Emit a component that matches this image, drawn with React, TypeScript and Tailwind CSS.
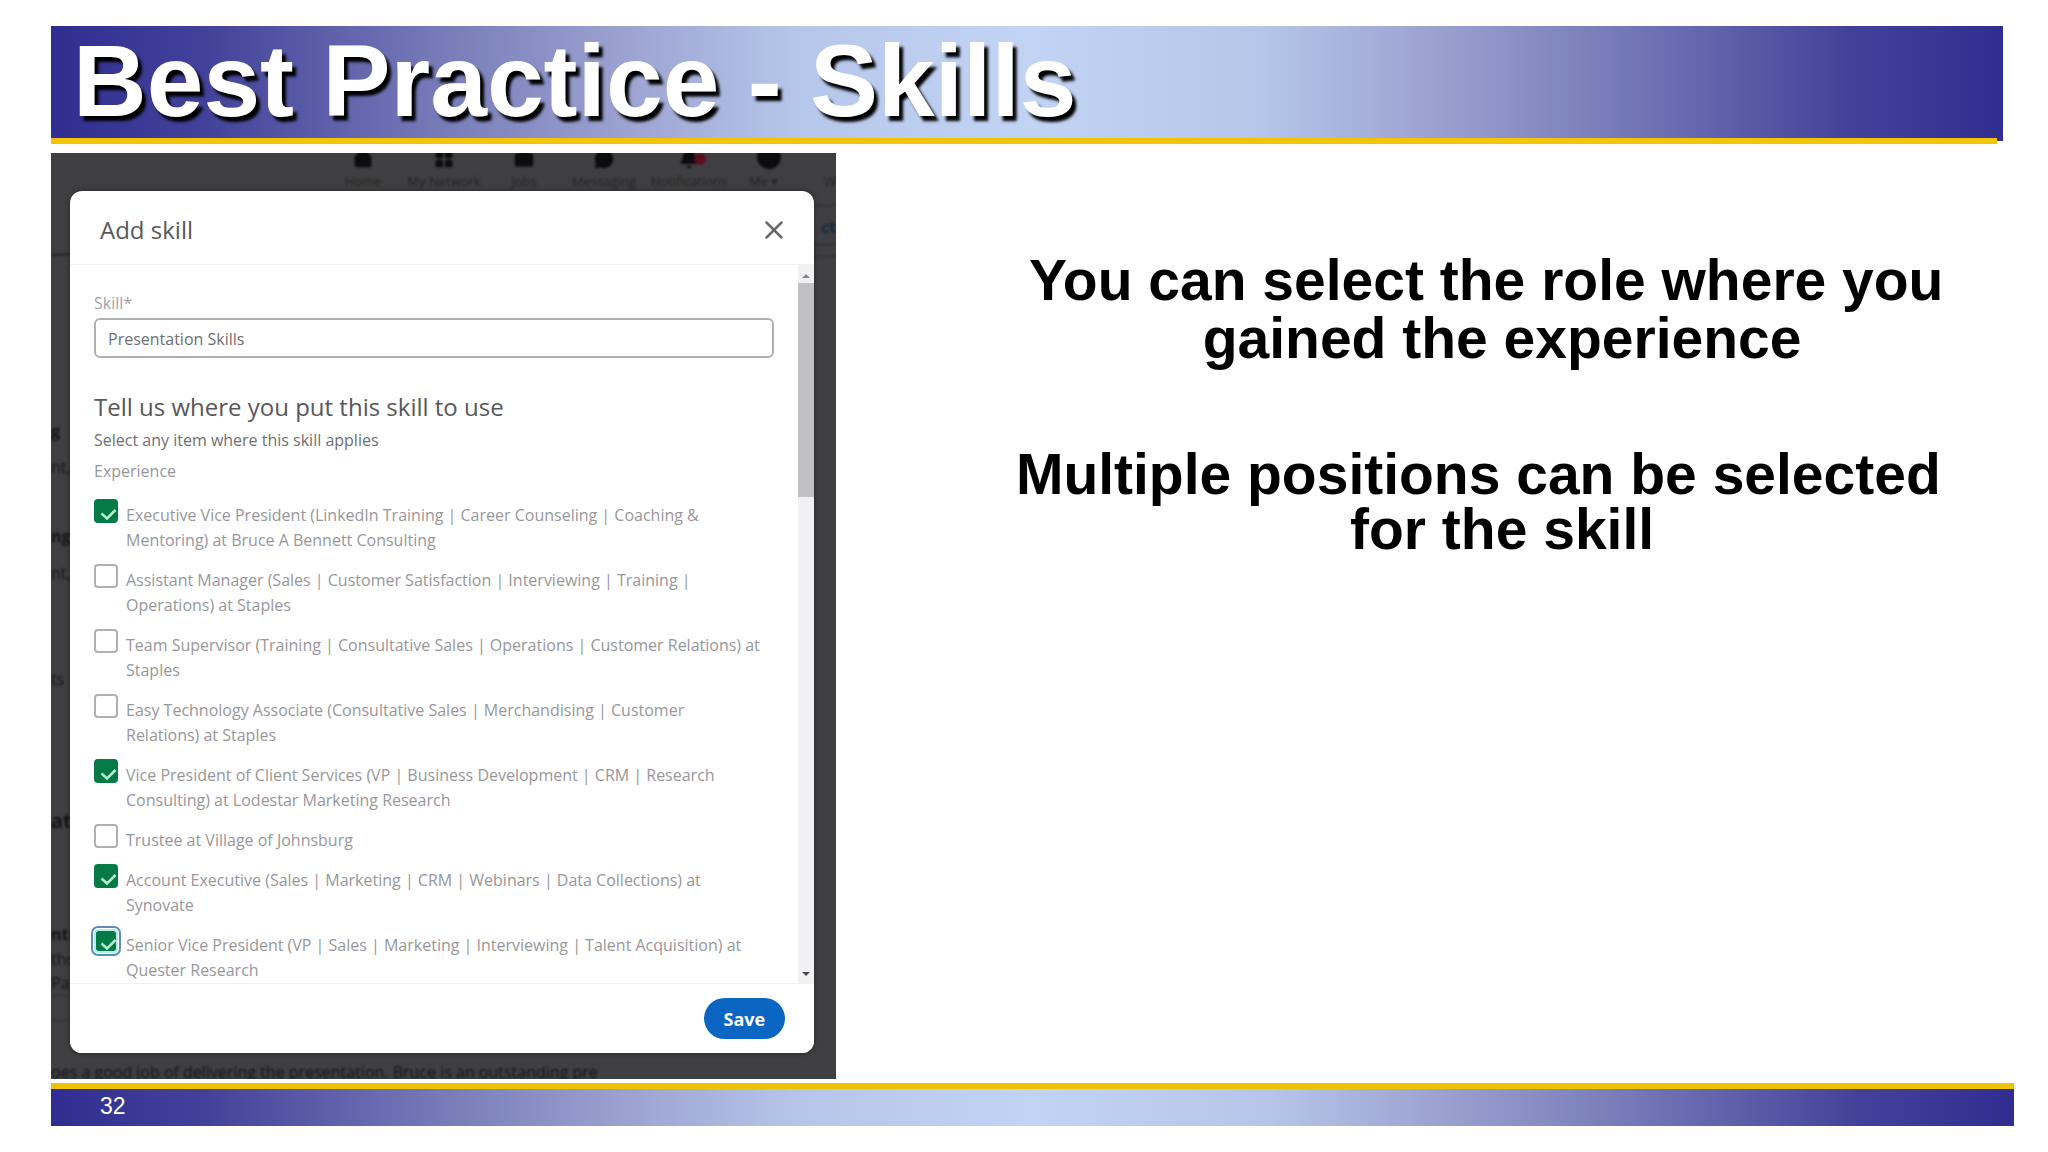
import { useState } from "react";
import { Bell, BriefcaseBusiness, House, LayoutGrid, MessageCircle, X } from "lucide-react";

const roles = [
  {
    id: "bennett",
    lines: ["Executive Vice President (LinkedIn Training | Career Counseling | Coaching &", "Mentoring) at Bruce A Bennett Consulting"],
    checked: true,
  },
  {
    id: "staples-manager",
    lines: ["Assistant Manager (Sales | Customer Satisfaction | Interviewing | Training |", "Operations) at Staples"],
    checked: false,
  },
  {
    id: "staples-supervisor",
    lines: ["Team Supervisor (Training | Consultative Sales | Operations | Customer Relations) at", "Staples"],
    checked: false,
  },
  {
    id: "staples-tech",
    lines: ["Easy Technology Associate (Consultative Sales | Merchandising | Customer", "Relations) at Staples"],
    checked: false,
  },
  {
    id: "lodestar",
    lines: ["Vice President of Client Services (VP | Business Development | CRM | Research", "Consulting) at Lodestar Marketing Research"],
    checked: true,
  },
  {
    id: "johnsburg",
    lines: ["Trustee at Village of Johnsburg"],
    checked: false,
  },
  {
    id: "synovate",
    lines: ["Account Executive (Sales | Marketing | CRM | Webinars | Data Collections) at", "Synovate"],
    checked: true,
  },
  {
    id: "quester",
    lines: ["Senior Vice President (VP | Sales | Marketing | Interviewing | Talent Acquisition) at", "Quester Research"],
    checked: true,
    focused: true,
  },
];

const navItems = [
  { name: "Home", icon: House, place: "left-[272px]" },
  { name: "My Network", icon: LayoutGrid, place: "left-[353px]" },
  { name: "Jobs", icon: BriefcaseBusiness, place: "left-[433px]" },
  { name: "Messaging", icon: MessageCircle, place: "left-[513px]" },
  { name: "Notifications", icon: Bell, place: "left-[598px]" },
];

// Bits of the profile page that stick out from behind the dialog
const pageScraps = [
  { text: "g", place: "top-[266px] font-bold" },
  { text: "nt,", place: "top-[302px]" },
  { text: "ng", place: "top-[371px] font-bold" },
  { text: "nt,", place: "top-[408px]" },
  { text: "ts", place: "top-[514px]" },
  { text: "at", place: "top-[656px] text-xl font-bold" },
  { text: "nts", place: "top-[769px] font-bold" },
  { text: "tho", place: "top-[794px]" },
  { text: "Pa", place: "top-[818px]" },
];

function ProfileBackdrop() {
  return (
    <div className="absolute inset-0 text-base text-[#141416] blur-[1px]" aria-hidden="true">
      {navItems.map((item) => (
        <div key={item.name} className={`absolute -top-1 flex w-20 flex-col items-center ${item.place}`}>
          <item.icon className="size-5 fill-current text-[#0c0c0c]" />
          <span className="mt-0.5 text-[13px] leading-5 whitespace-nowrap text-[#232325]">{item.name}</span>
        </div>
      ))}
      <div className="absolute top-0 left-[643px] h-3 w-3 rounded-full bg-[#5c0d1d]" />
      <div className="absolute -top-2 left-[706px] size-6 rounded-full bg-[#0c0c0c]" />
      <span className="absolute top-[18px] left-[698px] text-[13px] leading-5 text-[#232325]">Me ▾</span>
      <span className="absolute top-[18px] right-0 text-[13px] leading-5 text-[#232325]">W</span>
      <div className="absolute top-[52px] right-0 h-[40px] w-6 border-y border-[#2a2a2c]" />
      <span className="absolute top-[64px] right-0 text-base leading-5 font-bold text-[#14283f]">ct</span>
      <div className="absolute top-[103px] right-0 h-px w-6 bg-[#2a2a2c]" />
      <div className="absolute top-[100px] left-0 h-[3px] w-5 bg-[#2c2c2e]" />
      {pageScraps.map((scrap) => (
        <span key={scrap.place} className={`absolute left-0 leading-6 ${scrap.place}`}>
          {scrap.text}
        </span>
      ))}
      <div className="absolute top-[842px] left-0 h-[26px] w-5 border-y border-[#2c2c2e]" />
      <p className="absolute bottom-[-5px] left-0 leading-6 whitespace-nowrap">
        oes a good job of delivering the presentation. Bruce is an outstanding pre
      </p>
    </div>
  );
}

function RoleOption({ role }: { role: (typeof roles)[number] }) {
  const [checked, setChecked] = useState(role.checked);

  return (
    <li className="flex items-start gap-2">
      <span className="relative size-6 flex-none">
        <input
          id={role.id}
          type="checkbox"
          checked={checked}
          onChange={() => setChecked(!checked)}
          className={`block size-6 appearance-none rounded-sm border-2 bg-white checked:bg-[#067a46] ${
            role.focused
              ? "border-[#b5ecf0] bg-clip-padding outline-2 outline-offset-1 outline-[#5b8fb5]"
              : "border-[#b0b0b3] outline-none checked:border-[#067a46]"
          }`}
        />
        {checked && (
          <svg viewBox="0 0 24 24" className="pointer-events-none absolute inset-0 size-6" fill="none" aria-hidden="true">
            <path d="M7.500 14.500l5.500 5L21.500 11" stroke="#b5f0cf" strokeWidth="2.500" />
          </svg>
        )}
      </span>
      <label htmlFor={role.id} className="mt-1 text-[16px] leading-[25px] whitespace-nowrap text-[#97979a]">
        {role.lines.map((line) => (
          <span key={line} className="block">
            {line}
          </span>
        ))}
      </label>
    </li>
  );
}

function AddSkillDialog() {
  return (
    <section className="relative flex flex-col rounded-xl bg-white shadow-[0_0_4px_#222]" role="dialog" aria-labelledby="dialog-title">
      <header className="flex h-[74px] items-center justify-between border-b border-[#f0f0f3] pt-1 pr-[28px] pl-[30px]">
        <h2 id="dialog-title" className="text-[24px] leading-8 text-[#58585b]">
          Add skill
        </h2>
        <button type="button" aria-label="Close">
          <X className="size-6 scale-125 text-[#69696c]" strokeWidth={2} />
        </button>
      </header>

      <div className="flex">
        <form className="min-w-0 flex-1 pt-7 pr-6 pl-6">
          <label htmlFor="skill" className="block pb-[5px] text-[16px] leading-5 text-[#a3a3a6]">
            Skill*
          </label>
          <input
            id="skill"
            type="text"
            defaultValue="Presentation Skills"
            className="block h-10 w-full rounded-md border-2 border-[#b0b0b3] px-3 pt-0.5 text-[16px] text-[#6f6f72]"
          />
          <h3 className="mt-[33px] text-[24px] leading-8 text-[#58585b]">Tell us where you put this skill to use</h3>
          <p className="mt-[5px] text-[16px] leading-6 text-[#6f6f72]">Select any item where this skill applies</p>
          <fieldset className="mt-[7px]">
            <legend className="text-[16px] leading-6 text-[#97979a]">Experience</legend>
            <ul className="mt-4 flex flex-col gap-[11px]">
              {roles.map((role) => (
                <RoleOption key={role.id} role={role} />
              ))}
            </ul>
          </fieldset>
        </form>

        <div className="flex w-4 flex-none flex-col items-center bg-[#f1f0f2]" aria-hidden="true">
          <svg viewBox="0 0 16 18" className="h-[18px] w-4">
            <path d="M8 9l4 4H4z" fill="#8a8a8d" />
          </svg>
          <div className="h-[214px] w-full bg-[#c1c1c3]" />
          <svg viewBox="0 0 16 18" className="mt-auto h-[18px] w-4">
            <path d="M8 11l4-4H4z" fill="#4a4a4d" />
          </svg>
        </div>
      </div>

      <footer className="flex justify-end rounded-b-xl border-t border-[#f0f0f3] bg-white px-[29px] py-[14px]">
        <button type="button" className="h-[41px] rounded-full bg-[#0a66c2] px-5 pt-0.5 text-[18px] font-bold text-white">
          Save
        </button>
      </footer>
    </section>
  );
}

const band =
  "bg-[linear-gradient(to_right,#2f2e90,#43429a_8%,#7b80bb_21%,#9ea5d2_30%,#b5c6ea_38%,#c2d4f5_50%,#b5c6ea_62%,#9ea5d2_70%,#7b80bb_79%,#43429a_92%,#2f2e90)]";

export default function App() {
  return (
    <div className="min-h-screen bg-white pt-[26px] pr-[34px] pl-[51px] font-['Liberation_Sans',Arial,sans-serif]">
      <header className={`relative mr-[11px] h-[115px] pl-[22px] ${band}`}>
        <h1 className="text-[102px] leading-[110px] font-bold whitespace-nowrap text-white [text-shadow:4px_5px_3px_#000]">
          Best Practice - Skills
        </h1>
        <div className="absolute right-[6px] -bottom-[3px] left-0 h-[6px] bg-[#f3c500]" />
      </header>

      <main className="mt-3 flex">
        <div className="relative w-2/5 overflow-hidden bg-[#3f3f41] pt-[38px] pr-[22px] pb-[26px] pl-[19px] font-['Open_Sans','Noto_Sans',sans-serif]">
          <ProfileBackdrop />
          <AddSkillDialog />
        </div>

        <div className="flex-1 pt-[98px] pl-[154px] text-center text-[57px] font-bold whitespace-pre text-black">
          <p className="leading-[58px]">
            {"You can select the role where you\u00a0\u00a0"}
            <br />
            gained the experience
          </p>
          <p className="mt-20 leading-[55px]">
            {"Multiple positions can be selected\u00a0\u00a0\u00a0"}
            <br />
            for the skill
          </p>
        </div>
      </main>

      <footer className={`mt-1 border-t-[6px] border-[#eec300] text-[23px] leading-[34px] text-white`}>
        <div className={`h-[37px] pl-[49px] ${band}`}>32</div>
      </footer>
    </div>
  );
}
